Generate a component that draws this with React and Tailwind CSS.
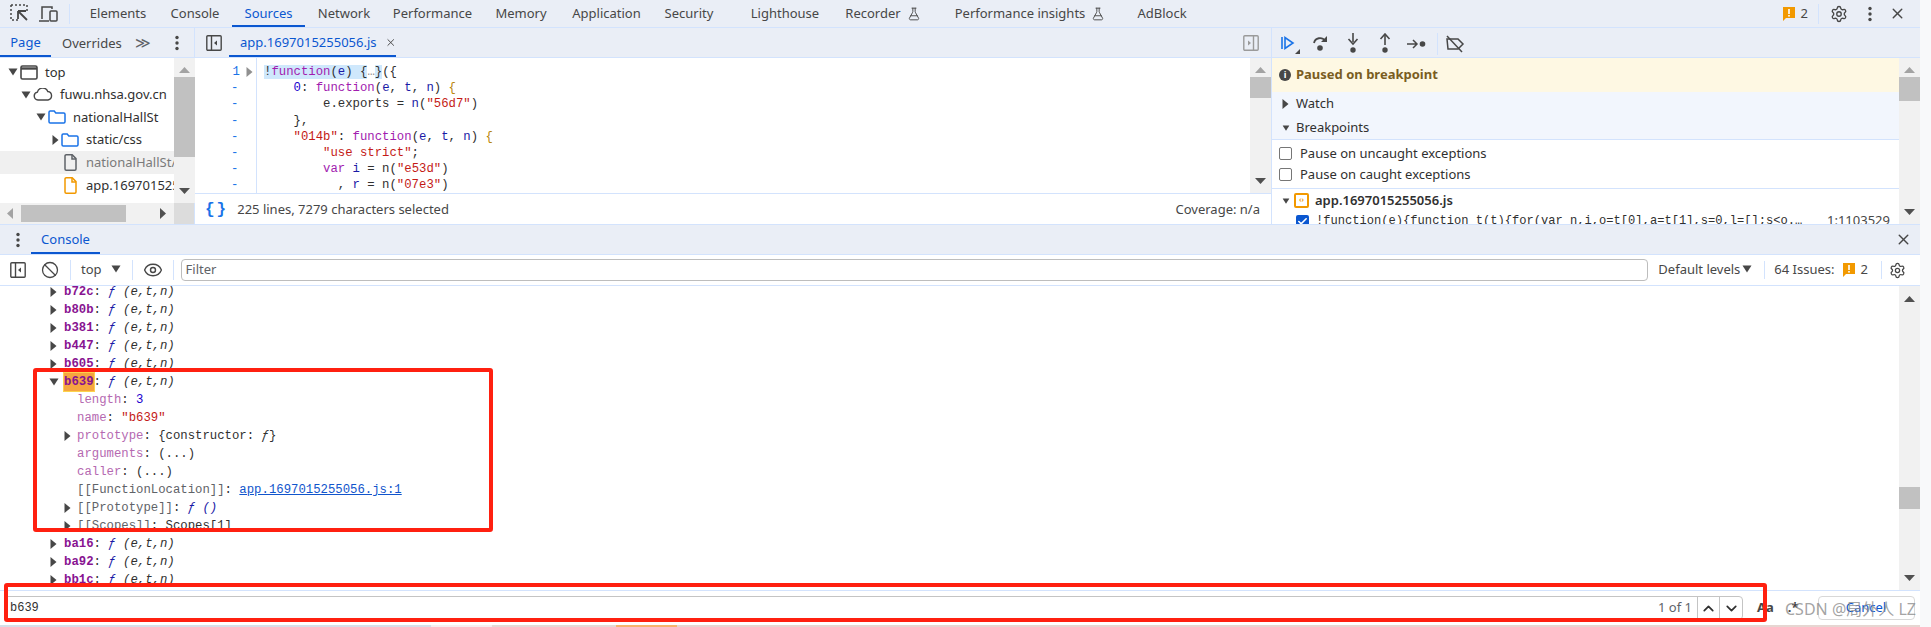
import { X, Settings, Eye, Ban, ChevronUp, ChevronDown, Check, FlaskConical } from 'lucide-react';

const ui = { fontFamily: '"Noto Sans", sans-serif' };

const topTabs = [
  { label: 'Elements', cls: 'w-[80px]' },
  { label: 'Console', cls: 'w-[74px]' },
  { label: 'Sources', cls: 'w-[73px]', active: true },
  { label: 'Network', cls: 'w-[78px]' },
  { label: 'Performance', cls: 'w-[99px]' },
  { label: 'Memory', cls: 'w-[78px]' },
  { label: 'Application', cls: 'w-[93px]' },
  { label: 'Security', cls: 'w-[72px]' },
  { label: 'Lighthouse', cls: 'w-[90px] ml-[15px]' },
  { label: 'Recorder', cls: 'w-[78px] ml-[14px]', flask: true },
  { label: 'Performance insights', cls: 'w-[156px] ml-[30px]', flask: true },
  { label: 'AdBlock', cls: 'w-[70px] ml-[19px]' },
];

const K = 'text-[#a21caf]';
const V = 'text-[#1a1aa6]';
const S = 'text-[#c41a16]';
const N = 'text-[#1c00cf]';
const B = 'text-[#b8860b]';

const codeLines = [
  null,
  [['    '], ['0', N], [': '], ['function', K], ['('], ['e', V], [', '], ['t', V], [', '], ['n', V], [') '], ['{', B]],
  [['        e.exports = '], ['n', V], ['('], ['"56d7"', S], [')']],
  [['    },']],
  [['    '], ['"014b"', S], [': '], ['function', K], ['('], ['e', V], [', '], ['t', V], [', '], ['n', V], [') '], ['{', B]],
  [['        '], ['"use strict"', S], [';']],
  [['        '], ['var', K], [' '], ['i', V], [' = n('], ['"e53d"', S], [')']],
  [['          , '], ['r', V], [' = n('], ['"07e3"', S], [')']],
];

function Tri({ open, cls = '' }) {
  return open ? (
    <svg width="10" height="8" viewBox="0 0 10 8" className={`shrink-0 ${cls}`}>
      <path d="M0.5 0.5h9L5 7.5z" fill="#474747" />
    </svg>
  ) : (
    <svg width="7" height="10" viewBox="0 0 7 10" className={`shrink-0 ${cls}`}>
      <path d="M0.5 0v10L6.5 5z" fill="#474747" />
    </svg>
  );
}

function Kebab() {
  return (
    <svg width="4" height="16" viewBox="0 0 4 16" className="shrink-0">
      <circle cx="2" cy="2.5" r="1.7" fill="#474747" />
      <circle cx="2" cy="8" r="1.7" fill="#474747" />
      <circle cx="2" cy="13.5" r="1.7" fill="#474747" />
    </svg>
  );
}

function Badge() {
  return (
    <svg width="12" height="14" viewBox="0 0 12 14" className="shrink-0">
      <path d="M0 0h12v11H3l-3 3z" fill="#f29900" />
      <rect x="5.2" y="2" width="1.6" height="5" fill="#fff" />
      <rect x="5.2" y="8" width="1.6" height="1.6" fill="#fff" />
    </svg>
  );
}

function PanelIcon({ right }) {
  return (
    <svg width="16" height="16" viewBox="0 0 16 16" className="shrink-0" fill="none" stroke={right ? '#9a9a9a' : '#474747'} strokeWidth="1.4">
      <rect x="0.8" y="0.8" width="14.4" height="14.4" rx="1" />
      <path d={right ? 'M10.5 1v14' : 'M5.5 1v14'} />
      <path d={right ? 'M5 5.5v5l3-2.5z' : 'M11 5.5v5l-3-2.5z'} fill={right ? '#9a9a9a' : '#474747'} stroke="none" />
    </svg>
  );
}

function Folder() {
  return (
    <svg width="18" height="14" viewBox="0 0 18 14" fill="none" stroke="#1a73e8" strokeWidth="1.5" className="shrink-0">
      <path d="M1 2.2a1.2 1.2 0 0 1 1.2-1.2h4l1.6 2h8a1.2 1.2 0 0 1 1.2 1.2v7.6a1.2 1.2 0 0 1-1.2 1.2H2.2A1.2 1.2 0 0 1 1 11.8z" />
    </svg>
  );
}

function FileIcon({ color }) {
  return (
    <svg width="13" height="17" viewBox="0 0 13 17" fill="none" stroke={color} strokeWidth="1.5" className="shrink-0 mr-[2px]">
      <path d="M1 2a1.2 1.2 0 0 1 1.2-1.2h6L12 4.6V15a1.2 1.2 0 0 1-1.2 1.2H2.2A1.2 1.2 0 0 1 1 15z" />
      <path d="M8 1v4h4" />
    </svg>
  );
}

function VBar({ thumb }) {
  return (
    <div className="w-[21px] shrink-0 bg-[#f1f1f1] flex flex-col items-center">
      <svg width="11" height="6" viewBox="0 0 11 6" className="mt-[9px] shrink-0"><path d="M0 6h11L5.5 0z" fill="#a3a3a3" /></svg>
      <div className={`w-full bg-[#c1c1c1] ${thumb}`} />
      <div className="flex-1" />
      <svg width="11" height="6" viewBox="0 0 11 6" className="mb-[9px] shrink-0"><path d="M0 0h11L5.5 6z" fill="#505050" /></svg>
    </div>
  );
}

function TreeRow({ pad, open, arrow, icon, text, cls = '' }) {
  return (
    <div className={`h-[22.6px] flex items-center whitespace-nowrap overflow-hidden ${pad} ${cls}`}>
      {arrow && <Tri open={open} cls="mr-[2px]" />}
      {icon}
      <span className="ml-[7px]">{text}</span>
    </div>
  );
}

function SourcesSidebar() {
  return (
    <div className="w-[195px] shrink-0 flex flex-col border-r border-[#d3e3fd]">
      <div className="h-[30px] bg-[#eaeef6] border-b border-[#d3e3fd] flex items-center text-[13px] text-[#474747]">
        <div className="h-full w-[51px] pt-[2px] flex items-center justify-center text-[#0b57d0] border-b-2 border-[#0b57d0]">Page</div>
        <span className="ml-[11px] mt-[2px]">Overrides</span>
        <span className="ml-[13px] text-[15px] text-[#5f6368] tracking-[-1px]">≫</span>
        <span className="ml-[25px]"><Kebab /></span>
      </div>
      <div className="flex-1 flex flex-col min-h-0">
        <div className="flex-1 flex min-h-0">
          <div className="w-[174px] shrink-0 pt-[3px] overflow-hidden text-[13px] text-[#303030]">
            <TreeRow pad="pl-[8px]" arrow open text="top" icon={
              <svg width="18" height="15" viewBox="0 0 18 15" fill="none" stroke="#474747" strokeWidth="1.6" className="shrink-0"><rect x="1" y="1" width="16" height="13" rx="1.5" /><path d="M1 3.5h16" strokeWidth="2.4" /></svg>
            } />
            <TreeRow pad="pl-[21px]" arrow open text="fuwu.nhsa.gov.cn" icon={
              <svg width="20" height="13" viewBox="0 0 20 13" fill="none" stroke="#474747" strokeWidth="1.4" className="shrink-0"><path d="M5 12a4 4 0 0 1-.6-7.9A5.5 5.5 0 0 1 14.8 3.5 4.3 4.3 0 0 1 15 12z" /></svg>
            } />
            <TreeRow pad="pl-[36px]" arrow open text="nationalHallSt" icon={<Folder />} />
            <TreeRow pad="pl-[52px]" arrow text="static/css" icon={<Folder />} />
            <TreeRow pad="pl-[64px]" cls="bg-[#f0f0f0] text-[#7a7a7a]" text="nationalHallSt/" icon={<FileIcon color="#5f6368" />} />
            <TreeRow pad="pl-[64px]" text="app.1697015255056.js" icon={<FileIcon color="#f29900" />} />
          </div>
          <VBar thumb="h-[80px] mt-[4px]" />
        </div>
        <div className="h-[21px] shrink-0 flex bg-[#f1f1f1]">
          <div className="w-[174px] flex items-center">
            <svg width="6" height="11" viewBox="0 0 6 11" className="ml-[7px]"><path d="M6 0v11L0 5.5z" fill="#a3a3a3" /></svg>
            <div className="ml-[8px] w-[105px] h-[17px] bg-[#c1c1c1]" />
            <svg width="6" height="11" viewBox="0 0 6 11" className="ml-[34px]"><path d="M0 0v11l6-5.5z" fill="#505050" /></svg>
          </div>
          <div className="flex-1 bg-[#dcdcdc]" />
        </div>
      </div>
    </div>
  );
}

function Editor() {
  return (
    <div className="w-[1077px] shrink-0 flex flex-col border-r border-[#d3e3fd]">
      <div className="h-[30px] bg-[#eaeef6] border-b border-[#d3e3fd] flex items-center text-[13px]">
        <span className="ml-[11px]"><PanelIcon /></span>
        <div className="ml-[7px] h-full w-[167px] pt-[2px] flex items-center border-b-2 border-[#0b57d0] text-[#0b57d0]">
          <span className="ml-[11px]">app.1697015255056.js</span>
          <X size={13} strokeWidth={2} className="ml-[8px] text-[#474747]" />
        </div>
        <span className="ml-auto mr-[12px]"><PanelIcon right /></span>
      </div>
      <div className="h-[136px] flex border-b border-[#d3e3fd]">
        <div className="w-[62px] shrink-0 border-r border-[#d3e3fd] pt-[6px] font-['Liberation_Mono',monospace] text-[12.3px] leading-[16.2px] text-[#1a73e8]">
          <div className="flex items-center h-[16.2px] justify-end pr-[3px]">
            <span className="mr-[6px]">1</span>
            <Tri cls="opacity-60" />
          </div>
          {[0, 1, 2, 3, 4, 5, 6].map((i) => (
            <div key={i} className="h-[16.2px] pl-[36px]">-</div>
          ))}
        </div>
        <div className="flex-1 pl-[7px] pt-[6px] font-['Liberation_Mono',monospace] text-[12.3px] leading-[16.2px] text-[#303030] whitespace-pre overflow-hidden">
          <div>
            <span className="bg-[#cfe8fc]">!<span className={K}>function</span>(<span className={V}>e</span>) {'{'}</span>
            <span className="text-[#888]">…</span>
            <span className="bg-[#cfe8fc]">{'}'}</span>({'{'}
          </div>
          {codeLines.slice(1).map((line, i) => (
            <div key={i}>
              {line.map((p, j) => <span key={j} className={p[1]}>{p[0]}</span>)}
            </div>
          ))}
        </div>
        <VBar thumb="h-[21px] mt-[4px]" />
      </div>
      <div className="flex-1 pt-[2px] flex items-center text-[13px] text-[#474747]">
        <span className="ml-[10px] text-[#1a73e8] font-['Liberation_Mono',monospace] text-[16px] font-bold tracking-[2px]">{'{}'}</span>
        <span className="ml-[9px]">225 lines, 7279 characters selected</span>
        <span className="ml-auto mr-[11px]">Coverage: n/a</span>
      </div>
    </div>
  );
}

function DebugToolbar() {
  return (
    <div className="h-[30px] pt-[2px] bg-[#eaeef6] border-b border-[#d3e3fd] flex items-center">
      <svg width="20" height="20" viewBox="0 0 20 20" className="ml-[8px] shrink-0">
        <path d="M2 3v12" stroke="#1a73e8" strokeWidth="1.6" />
        <path d="M5 3.5v11L13 9z" fill="none" stroke="#1a73e8" strokeWidth="1.6" />
        <path d="M20 15v5h-5z" fill="#474747" />
      </svg>
      <svg width="20" height="20" viewBox="0 0 20 20" className="ml-[11px] shrink-0" fill="none">
        <path d="M3 9a6 6 0 0 1 11-2" stroke="#474747" strokeWidth="1.8" />
        <path d="M16 2v6h-6z" fill="#474747" />
        <circle cx="9" cy="14" r="2.8" fill="#474747" />
      </svg>
      <svg width="16" height="22" viewBox="0 0 16 22" className="ml-[14px] shrink-0">
        <path d="M8 0v9" stroke="#474747" strokeWidth="1.6" />
        <path d="M3.500 6L8 11l4.500-5" fill="none" stroke="#474747" strokeWidth="1.6" />
        <circle cx="8" cy="17" r="2.7" fill="#474747" />
      </svg>
      <svg width="16" height="22" viewBox="0 0 16 22" className="ml-[16px] shrink-0">
        <path d="M8 2v10" stroke="#474747" strokeWidth="1.6" />
        <path d="M3.500 6L8 1l4.500 5" fill="none" stroke="#474747" strokeWidth="1.6" />
        <circle cx="8" cy="17" r="2.7" fill="#474747" />
      </svg>
      <svg width="20" height="12" viewBox="0 0 20 12" className="ml-[14px] shrink-0">
        <path d="M0 6h10M6 2l4 4-4 4" fill="none" stroke="#474747" strokeWidth="1.5" />
        <circle cx="15.500" cy="6" r="2.800" fill="#474747" />
      </svg>
      <div className="ml-[10px] h-[22px] w-px bg-[#d3e3fd]" />
      <svg width="20" height="20" viewBox="0 0 20 20" className="ml-[7px] shrink-0" fill="none" stroke="#474747" strokeWidth="1.5">
        <path d="M2 5h11l5 5-5 5H3z" />
        <path d="M2 2l15 16" />
      </svg>
    </div>
  );
}

function DebugPanel() {
  return (
    <div className="flex-1 flex flex-col min-w-0">
      <DebugToolbar />
      <div className="flex-1 flex min-h-0">
        <div className="flex-1 min-w-0 overflow-hidden flex flex-col text-[13px] text-[#303030]">
          <div className="h-[34px] shrink-0 bg-[#fef8e3] flex items-center">
            <span className="ml-[7px] w-[12px] h-[12px] rounded-full bg-[#474747] text-white text-[9px] font-bold flex items-center justify-center">i</span>
            <span className="ml-[5px] font-bold text-[#7a5d1f]">Paused on breakpoint</span>
          </div>
          <div className="h-[24px] shrink-0 bg-[#f2f6fd] flex items-center">
            <Tri cls="ml-[10px]" />
            <span className="ml-[7px]">Watch</span>
          </div>
          <div className="h-[24px] shrink-0 bg-[#f2f6fd] border-b border-[#d3e3fd] flex items-center">
            <Tri open cls="ml-[9px] scale-75" />
            <span className="ml-[5px]">Breakpoints</span>
          </div>
          <div className="h-[49px] shrink-0 border-b border-[#d3e3fd] pt-[3px]">
            <label className="h-[21px] flex items-center">
              <span className="ml-[7px] w-[13px] h-[13px] rounded-[2px] border border-[#767676] bg-white" />
              <span className="ml-[8px]">Pause on uncaught exceptions</span>
            </label>
            <label className="h-[21px] flex items-center">
              <span className="ml-[7px] w-[13px] h-[13px] rounded-[2px] border border-[#767676] bg-white" />
              <span className="ml-[8px]">Pause on caught exceptions</span>
            </label>
          </div>
          <div className="h-[23px] shrink-0 flex items-center">
            <Tri open cls="ml-[9px] scale-75" />
            <span className="ml-[3px] w-[15px] h-[15px] rounded-[2px] border-2 border-[#f29900] text-[#f29900] text-[7px] font-bold flex items-center justify-center shrink-0">‹›</span>
            <span className="ml-[6px] font-semibold">app.1697015255056.js</span>
          </div>
          <div className="flex items-center h-[18px]">
            <span className="ml-[24px] w-[13px] h-[13px] rounded-[2px] bg-[#0b57d0] flex items-center justify-center shrink-0">
              <Check size={11} strokeWidth={3.5} className="text-white" />
            </span>
            <span className="ml-[7px] font-['Liberation_Mono',monospace] text-[12.1px] whitespace-pre">!function(e){'{'}function t(t){'{'}for(var n,i,o=t[0],a=t[1],s=0,l=[];s{'<'}o.…</span>
            <span className="ml-auto mr-[9px] text-[#474747] whitespace-nowrap">1:1103529</span>
          </div>
        </div>
        <VBar thumb="h-[24px] mt-[4px]" />
      </div>
    </div>
  );
}

const Fn = () => (
  <span className="italic text-[#1a1aa6]">ƒ <span className="text-[#303030]">(e,t,n)</span></span>
);

function Entry({ name, hit }) {
  return (
    <div className="h-[18px] flex items-center pl-[50px]">
      <Tri open={hit} cls={hit ? 'mr-[5px] -ml-[1px]' : 'mr-[7px]'} />
      <span className={`font-bold text-[#881391] ${hit ? 'bg-[#f6a53f] outline outline-[#fcd34d]' : ''}`}>{name}</span>
      <span>:&nbsp;</span>
      <Fn />
    </div>
  );
}

function Prop({ arrow, children }) {
  return (
    <div className="h-[18px] flex items-center pl-[64px] whitespace-pre">
      <span className="w-[13px] shrink-0">{arrow && <Tri />}</span>
      {children}
    </div>
  );
}

const P = 'text-[#b569b1]';

function ConsoleRows() {
  return (
    <div className="-mt-[3px] font-['Liberation_Mono',monospace] text-[12.3px] text-[#303030]">
      {['b72c', 'b80b', 'b381', 'b447', 'b605'].map((n) => <Entry key={n} name={n} />)}
      <Entry name="b639" hit />
      <Prop><span className={P}>length</span>: <span className="text-[#1c00cf]">3</span></Prop>
      <Prop><span className={P}>name</span>: <span className="text-[#c41a16]">"b639"</span></Prop>
      <Prop arrow><span className={P}>prototype</span>: {'{'}constructor: <span className="italic">ƒ</span>{'}'}</Prop>
      <Prop><span className={P}>arguments</span>: (...)</Prop>
      <Prop><span className={P}>caller</span>: (...)</Prop>
      <Prop><span className="text-[#5f6368]">[[FunctionLocation]]</span>: <span className="text-[#1155cc] underline">app.1697015255056.js:1</span></Prop>
      <Prop arrow><span className="text-[#5f6368]">[[Prototype]]</span>: <span className="italic text-[#1a1aa6]">ƒ ()</span></Prop>
      <Prop arrow><span className="text-[#5f6368]">[[Scopes]]</span>: Scopes[1]</Prop>
      {['ba16', 'ba92', 'bb1c'].map((n) => <Entry key={n} name={n} />)}
    </div>
  );
}

function Drawer() {
  return (
    <div className="flex-1 flex flex-col min-h-0 border-t border-[#d3e3fd]">
      <div className="h-[30px] shrink-0 bg-[#eaeef6] border-b border-[#d3e3fd] flex items-center text-[13px]">
        <span className="ml-[16px]"><Kebab /></span>
        <div className="ml-[11px] h-full w-[69px] pt-[3px] flex items-center justify-center text-[#0b57d0] border-b-2 border-[#0b57d0]">Console</div>
        <X size={17} strokeWidth={2} className="ml-auto mr-[8px] text-[#474747]" />
      </div>
      <div className="h-[31px] shrink-0 bg-white border-b border-[#d3e3fd] flex items-center text-[13px] text-[#474747]">
        <span className="ml-[10px]"><PanelIcon /></span>
        <Ban size={18} strokeWidth={1.7} className="ml-[15px]" />
        <div className="ml-[11px] h-[20px] w-px bg-[#d3e3fd]" />
        <span className="ml-[10px]">top</span>
        <Tri open cls="ml-[9px] -mt-[3px]" />
        <div className="ml-[11px] h-[20px] w-px bg-[#d3e3fd]" />
        <Eye size={20} strokeWidth={1.7} className="ml-[10px]" />
        <div className="ml-[10px] h-[20px] w-px bg-[#d3e3fd]" />
        <div className="ml-[7px] h-[22px] flex-1 rounded-[4px] border border-[#bdbdbd] flex items-center pl-[4px] text-[#5f6368]">Filter</div>
        <span className="ml-[10px]">Default levels</span>
        <Tri open cls="ml-[2px] -mt-[2px]" />
        <div className="ml-[12px] h-[18px] w-px bg-[#d3e3fd]" />
        <span className="ml-[9px]">64 Issues:</span>
        <span className="ml-[8px]"><Badge /></span>
        <span className="ml-[6px]">2</span>
        <div className="ml-[13px] h-[18px] w-px bg-[#d3e3fd]" />
        <Settings size={17} strokeWidth={1.8} className="ml-[7px] mr-[14px]" />
      </div>
      <div className="flex-1 flex min-h-0">
        <div className="flex-1 min-w-0 overflow-hidden"><ConsoleRows /></div>
        <div className="w-[21px] shrink-0 bg-[#f1f1f1] flex flex-col items-center">
          <svg width="11" height="6" viewBox="0 0 11 6" className="mt-[10px] shrink-0"><path d="M0 6h11L5.500 0z" fill="#505050" /></svg>
          <div className="mt-[185px] w-full h-[22px] bg-[#c1c1c1]" />
          <div className="flex-1" />
          <svg width="11" height="6" viewBox="0 0 11 6" className="mb-[9px] shrink-0"><path d="M0 0h11L5.500 6z" fill="#505050" /></svg>
        </div>
      </div>
      <div className="h-[35px] shrink-0 border-t border-[#d3e3fd] bg-white flex items-center text-[13px] text-[#474747]">
        <div className="ml-[5px] w-[1738px] h-[24px] border border-[#c4c4c4] rounded-r-[4px] flex items-center text-[#303030]">
          <span className="ml-[4px] font-['Liberation_Mono',monospace] text-[12px]">b639</span>
          <span className="ml-auto text-[#5f6368]">1 of 1</span>
          <div className="ml-[5px] h-full w-[23px] border-x border-[#c4c4c4] flex items-center justify-center"><ChevronUp size={17} strokeWidth={2.4} /></div>
          <div className="h-full w-[22px] flex items-center justify-center"><ChevronDown size={17} strokeWidth={2.4} /></div>
        </div>
        <span className="ml-[14px] font-bold text-[#474747]">Aa</span>
        <span className="ml-[14px] font-bold text-[#474747]">.*</span>
        <div className="ml-[19px] w-[97px] h-[24px] rounded-[4px] border border-[#d8d8d8] flex items-center justify-center text-[#0b57d0]">Cancel</div>
      </div>
    </div>
  );
}

export default function App() {
  return (
    <div className="w-[1931px] h-[627px] relative overflow-hidden bg-[#f8f9fa]" style={ui}>
      <div className="w-[1920px] h-[625px] bg-white flex flex-col">
        <div className="h-[28px] shrink-0 bg-[#eaeef6] border-b border-[#d3e3fd] flex items-center text-[13px] text-[#474747]">
          <div className="w-[78px] shrink-0 flex items-center">
            <svg width="20" height="20" viewBox="0 0 20 20" className="ml-[10px] shrink-0" fill="none" stroke="#474747" strokeWidth="1.5">
              <path d="M1 1h16v7M1 1v15h7" strokeDasharray="2 2" />
              <path d="M8 7l9 9M8 7v8M8 7h8" strokeWidth="1.800" />
            </svg>
            <svg width="20" height="18" viewBox="0 0 20 18" className="ml-[9px] shrink-0" fill="none" stroke="#474747" strokeWidth="1.5">
              <path d="M3 14V2h10v2M0 16h10" />
              <rect x="11" y="6" width="7" height="10" rx="1" />
            </svg>
            <div className="ml-[10px] h-[20px] w-px bg-[#d3e3fd]" />
          </div>
          {topTabs.map((t) => (
            <div key={t.label} className={`h-full shrink-0 pt-[3px] flex items-center justify-center gap-[6px] whitespace-nowrap border-b-2 ${t.cls} ${t.active ? 'text-[#0b57d0] border-[#0b57d0]' : 'border-transparent'}`}>
              {t.label}
              {t.flask && <FlaskConical size={14} strokeWidth={1.6} />}
            </div>
          ))}
          <div className="ml-auto flex items-center">
            <Badge />
            <span className="ml-[6px]">2</span>
            <div className="ml-[10px] h-[20px] w-px bg-[#d3e3fd]" />
            <Settings size={18} strokeWidth={1.8} className="ml-[11px]" />
            <span className="ml-[20px]"><Kebab /></span>
            <X size={17} strokeWidth={2} className="ml-[17px] mr-[14px]" />
          </div>
        </div>
        <div className="h-[196px] shrink-0 flex">
          <SourcesSidebar />
          <Editor />
          <DebugPanel />
        </div>
        <Drawer />
      </div>
      <div className="h-[2px] w-[1920px] flex">
        <div className="w-[431px] bg-[#d6dfe8]" />
        <div className="w-[61px] bg-[#f6eef0]" />
        <div className="w-[124px] bg-[#e4d9d6]" />
        <div className="w-[61px] bg-[#f7b36e]" />
        <div className="flex-1 bg-[#e6d6d2]" />
      </div>
      <div className="absolute left-[33px] top-[368px] w-[460px] h-[164px] border-4 border-[#ff2010] rounded-[3px] pointer-events-none" />
      <div className="absolute left-[4px] top-[583px] w-[1763px] h-[39px] border-4 border-[#ff2010] rounded-[3px] pointer-events-none" />
      <div className="absolute left-[1785px] top-[597px] text-[16px] text-[#8c8c8c]/80 whitespace-nowrap font-['Noto_Sans','Noto_Sans_CJK_SC',sans-serif] pointer-events-none">CSDN @局外人 LZ</div>
    </div>
  );
}
